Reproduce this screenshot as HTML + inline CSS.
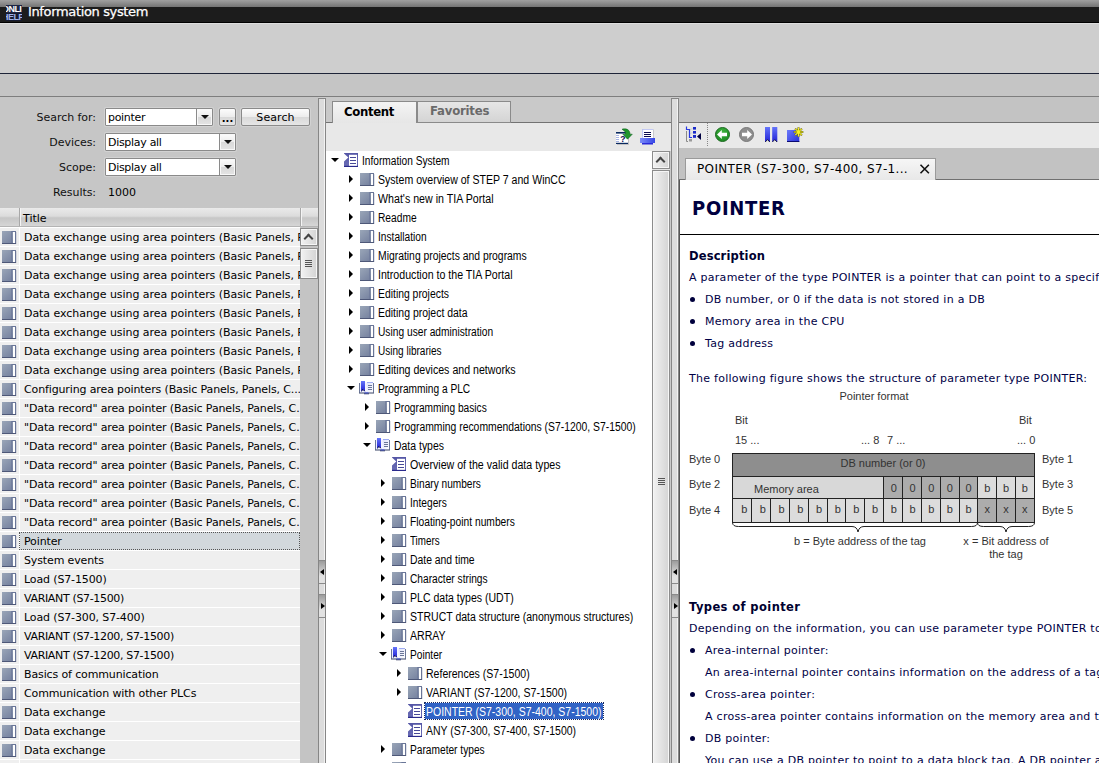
<!DOCTYPE html>
<html lang="en">
<head>
<meta charset="utf-8">
<title>Information system</title>
<style>
*{box-sizing:border-box;margin:0;padding:0}
html,body{width:1099px;height:763px;overflow:hidden;background:#cdcdcd}
body{font-family:"DejaVu Sans","Liberation Sans",sans-serif;font-size:11px;color:#000;position:relative}
#app{position:absolute;left:0;top:0;width:1099px;height:763px;overflow:hidden;background:#cdcdcd}
.abs{position:absolute}
/* title bar */
#tb-top{left:0;top:0;width:1099px;height:7px;background:linear-gradient(#a0a0a0,#747474)}
#tb{left:0;top:7px;width:1099px;height:15px;background:#1c1c1c}
#tb-line{left:0;top:22px;width:1099px;height:1px;background:#000}
#tb-hl{left:0;top:23px;width:1099px;height:1px;background:#dedede}
#logo{left:6px;top:5px;width:16px;height:16px;background:#10142a;overflow:hidden;font-family:"Liberation Sans",sans-serif;font-weight:bold;font-size:9px;line-height:8px;letter-spacing:-.55px}
#logo b{display:block;margin-left:-4px;white-space:nowrap}
#logo .l1{color:#fff;background:#1c2444;height:8px}
#logo .l2{color:#9fb2ea;background:#151a30;height:8px}
#title{left:28px;top:3px;-webkit-text-stroke:.25px #fff;color:#fff;font-size:13px;line-height:18px;letter-spacing:-.35px;white-space:nowrap}
#band1{left:0;top:24px;width:1099px;height:49px;background:#cecece}
#line1{left:0;top:73px;width:1099px;height:1px;background:#1e2438}
#band2{left:0;top:74px;width:1099px;height:22px;background:#c5c5c5}
#line2{left:0;top:96px;width:1099px;height:1px;background:#7e7e7e}
/* left panel */
#left{left:0;top:97px;width:318px;height:666px;background:#c6c6c6}
.lbl{position:absolute;width:96px;text-align:right;left:0;height:17px;line-height:19px;font-size:11px;letter-spacing:-.05px;color:#111}
.combo{position:absolute;height:18px;background:#fff;border-radius:1px;border:1px solid #8a8a8a;box-shadow:0 0 0 1px #d2d2d2;font-size:11px;line-height:17px;padding-left:2px;letter-spacing:-.3px}
.combo .dd{position:absolute;right:0;top:0;bottom:0;width:16px;border-left:1px solid #8a8a8a;background:linear-gradient(#fcfcfc 0,#ededed 48%,#d9d9d9 52%,#e4e4e4 100%);box-shadow:inset 0 0 0 1px #f8f8f8}
.combo .dd:after{content:"";position:absolute;left:4px;top:6px;border-left:4px solid transparent;border-right:4px solid transparent;border-top:4px solid #111}
.btn{position:absolute;height:18px;border:1px solid #8a8a8a;box-shadow:0 0 0 1px #d2d2d2;background:linear-gradient(#fcfcfc 0,#ededed 48%,#d9d9d9 52%,#e6e6e6 100%);border-radius:2px;font-size:11px;line-height:17px;text-align:center;letter-spacing:.1px}
#thead{left:0;top:111px;width:318px;height:19px;background:linear-gradient(#eaeaea 0,#dcdcdc 45%,#c6c6c6 55%,#d6d6d6 100%);border-bottom:1px solid #b4b4b4;font-size:11px;line-height:21px}
#thead i{position:absolute;top:0;width:1px;height:18px;background:#a8a8a8;box-shadow:1px 0 0 #f4f4f4}
#rows{position:absolute;left:0;top:130px;width:300px;height:540px;overflow:hidden;background:#fff}
.row{position:relative;height:19px;width:300px;overflow:hidden;white-space:nowrap;background:#efefef;border-top:1px solid #fff;font-size:11px;line-height:19px;letter-spacing:-.13px;color:#000}
.row .ic{position:absolute;left:1px;top:2px}
.row .rt{position:absolute;left:19px;top:0;height:18px;padding-left:4px;border-left:1px solid #fff;width:281px;overflow:hidden}
.row.sel .rt{background:#d2d8dc;outline:1px dotted #555;outline-offset:-1px}
.row.sel{background:#efefef}
.row.w1{letter-spacing:-.05px}
.row.w2{letter-spacing:-.34px}
#lsb{left:300px;top:130px;width:18px;height:536px;background:#c4c4c4}
.sbtn{position:absolute;width:18px;border:1px solid #8c8c8c;background:linear-gradient(90deg,#f2f2f2,#d4d4d4);box-shadow:inset 0 0 0 1px #f6f6f6}
.chev{position:absolute;left:4px;top:6px;width:7px;height:7px;border-left:2px solid #444;border-top:2px solid #444;transform:rotate(45deg)}
.grip{position:absolute;left:4px;width:7px;height:7px;background:repeating-linear-gradient(#555 0,#555 1px,transparent 1px,transparent 2px)}
/* splitters */
.split{position:absolute;top:98px;width:8px;height:665px;background:#dcdcdc;border-left:1px solid #868686;border-right:1px solid #868686;border-top:1px solid #868686;box-shadow:inset -1px 0 0 #f2f2f2}
.split .h{position:absolute;left:0;width:6px;height:24px;background:linear-gradient(#9c9c9c,#e2e2e2 70%);border-top:1px solid #8a8a8a;border-bottom:1px solid #8a8a8a}
.split .h:after{content:"";position:absolute;top:8px}
.split .hl:after{left:1px;border-top:3px solid transparent;border-bottom:3px solid transparent;border-right:4px solid #000}
.split .hr:after{left:2px;border-top:3px solid transparent;border-bottom:3px solid transparent;border-left:4px solid #000}
/* middle */
#mid{left:326px;top:97px;width:345px;height:666px;background:#c9c9c9}
#tabc{left:6px;top:4px;width:85px;height:22px;background:linear-gradient(#f4f4f4,#e6e6e6);border:1px solid #8a8a8a;border-bottom:none;font-family:"DejaVu Sans Condensed","DejaVu Sans",sans-serif;font-weight:bold;font-size:13px;line-height:19px;text-align:left;padding-left:11px;letter-spacing:-.35px;color:#000}
#tabf{left:91px;top:4px;width:94px;height:22px;background:linear-gradient(#e6e6e6,#d4d4d4);border:1px solid #8a8a8a;font-family:"DejaVu Sans Condensed","DejaVu Sans",sans-serif;font-weight:bold;font-size:13px;line-height:18px;text-align:left;padding-left:12px;letter-spacing:-.2px;color:#6a6a6a}
#mtool{left:0;top:25px;width:345px;height:29px;background:#e8e8e8;border-top:1px solid #727272}
#tree{position:absolute;left:0;top:54px;width:326px;height:612px;background:#fff;overflow:hidden;font-family:"Liberation Sans",sans-serif;font-size:12px}
.ti{position:relative;height:19px;white-space:nowrap}
.ti i{position:absolute;top:0;margin-left:4px}
.ti .ac{top:5px;margin-left:7px;border-top:4.5px solid transparent;border-bottom:4.5px solid transparent;border-left:4.5px solid #000}
.ti .ao{top:7px;margin-left:5px;border-left:4.5px solid transparent;border-right:4.5px solid transparent;border-top:4.5px solid #000}
.ti .ic{position:absolute;top:2px;margin-left:17px}
.ti .tt{position:absolute;top:1px;margin-left:35px;height:16px;line-height:19px;padding:0 1px}
.ti .tx{display:inline-block;transform-origin:0 50%;white-space:pre}
.ti .tsel{background:#3163c5;color:#fff;outline:1px dotted #1a2a60}
#msb{left:326px;top:54px;width:18px;height:612px;background:#e6e6e6}
/* right */
#right{left:679px;top:97px;width:420px;height:666px;background:#c3c3c3}
#rtool{left:0;top:25px;width:420px;height:26px;background:#e9e9e9;border-top:1px solid #727272}
#rband{left:0;top:51px;width:420px;height:32px;background:#c2c2c2;border-bottom:1px solid #707070}
#rtab{left:6px;top:61px;width:251px;height:22px;background:linear-gradient(#f6f6f6,#e8e8e8);border:1px solid #9a9a9a;border-bottom:none;font-size:12px;line-height:20px;letter-spacing:.35px;padding-left:11px;white-space:nowrap;color:#000}
#doc{left:0;top:83px;width:420px;height:583px;background:#fff;border-left:1px solid #555;overflow:hidden;font-size:11px;letter-spacing:.27px;color:#000046;white-space:nowrap}
#doc .ln{position:absolute;left:9px;height:22px;line-height:22px;margin-top:2px}
#doc .bl{left:25px}
#doc .dot{position:absolute;left:10px;margin-top:1px;width:5px;height:5px;border-radius:50%;background:#00003c}
#doc h1{position:absolute;left:12px;top:15px;font-family:"DejaVu Sans Condensed","DejaVu Sans",sans-serif;font-size:20px;line-height:26px;font-weight:bold;letter-spacing:.7px;color:#000040}
#doc h2{position:absolute;left:9px;font-size:11.5px;line-height:22px;font-weight:bold;letter-spacing:.15px;color:#000030;margin-top:2px}
#doc hr{position:absolute;left:0;top:54px;width:420px;height:1px;border:0;background:#000}
svg text{font-family:"Liberation Sans",sans-serif;letter-spacing:0}
</style>
</head>
<body>
<svg width="0" height="0" style="position:absolute">
<defs>
<linearGradient id="gbk" x1="0" y1="0" x2="1" y2="1"><stop offset="0" stop-color="#9aa6b8"/><stop offset="1" stop-color="#6e7a9a"/></linearGradient>
<linearGradient id="gfl" x1="0" y1="0" x2="0" y2="1"><stop offset="0" stop-color="#5456a6"/><stop offset="1" stop-color="#6c6eb6"/></linearGradient><linearGradient id="gbm" x1="0" y1="0" x2="0" y2="1"><stop offset="0" stop-color="#6474fa"/><stop offset="1" stop-color="#2222d6"/></linearGradient><linearGradient id="gpg" x1="0" y1="0" x2="1" y2="1"><stop offset="0" stop-color="#dde1fb"/><stop offset="1" stop-color="#ffffff"/></linearGradient>
</defs>
</svg>
<div id="app">
<div id="tb-top" class="abs"></div><div id="tb" class="abs"></div><div id="tb-line" class="abs"></div><div id="tb-hl" class="abs"></div>
<div id="logo" class="abs"><b class="l1">ONLI</b><b class="l2">HELP</b></div>
<div id="title" class="abs">Information system</div>
<div id="band1" class="abs"></div><div id="line1" class="abs"></div><div id="band2" class="abs"></div><div id="line2" class="abs"></div>

<div id="left" class="abs">
<div class="lbl" style="top:11px">Search for:</div>
<div class="lbl" style="top:36px">Devices:</div>
<div class="lbl" style="top:61px">Scope:</div>
<div class="lbl" style="top:86px">Results:</div>
<div class="combo" style="left:105px;top:11px;width:108px">pointer<span class="dd"></span></div>
<div class="btn" style="left:219px;top:11px;width:17px;font-weight:bold;font-size:10px;line-height:19px;letter-spacing:0">...</div>
<div class="btn" style="left:241px;top:11px;width:69px">Search</div>
<div class="combo" style="left:105px;top:36px;width:131px">Display all<span class="dd"></span></div>
<div class="combo" style="left:105px;top:61px;width:131px">Display all<span class="dd"></span></div>
<div class="abs" style="left:108px;top:86px;height:17px;line-height:19px;font-size:11px">1000</div>
<div id="thead" class="abs"><i style="left:19px"></i><i style="left:300px"></i><span class="abs" style="left:23px;top:0">Title</span></div>

<div id="rows">
<div class="row w1"><svg class="ic" width="16" height="14" viewBox="0 0 16 14"><rect x="1" y="1" width="14" height="13" fill="url(#gbk)"/><rect x="10" y="1" width="1" height="12" fill="#6c789a" opacity=".7"/><rect x="11" y="1" width="4" height="1" fill="#6a7698"/><rect x="12" y="2" width="2" height="11" fill="#fff"/><rect x="14" y="1" width="1" height="13" fill="#6a7698"/><rect x="1" y="13" width="14" height="1" fill="#4e5878"/><rect x="2" y="14" width="14" height=".6" fill="#5a6488" opacity=".3"/><rect x="15" y="2" width=".6" height="12" fill="#5a6488" opacity=".3"/></svg><span class="rt">Data exchange using area pointers (Basic Panels, Panels, Comfort Panels)</span></div>
<div class="row w1"><svg class="ic" width="16" height="14" viewBox="0 0 16 14"><rect x="1" y="1" width="14" height="13" fill="url(#gbk)"/><rect x="10" y="1" width="1" height="12" fill="#6c789a" opacity=".7"/><rect x="11" y="1" width="4" height="1" fill="#6a7698"/><rect x="12" y="2" width="2" height="11" fill="#fff"/><rect x="14" y="1" width="1" height="13" fill="#6a7698"/><rect x="1" y="13" width="14" height="1" fill="#4e5878"/><rect x="2" y="14" width="14" height=".6" fill="#5a6488" opacity=".3"/><rect x="15" y="2" width=".6" height="12" fill="#5a6488" opacity=".3"/></svg><span class="rt">Data exchange using area pointers (Basic Panels, Panels, Comfort Panels)</span></div>
<div class="row w1"><svg class="ic" width="16" height="14" viewBox="0 0 16 14"><rect x="1" y="1" width="14" height="13" fill="url(#gbk)"/><rect x="10" y="1" width="1" height="12" fill="#6c789a" opacity=".7"/><rect x="11" y="1" width="4" height="1" fill="#6a7698"/><rect x="12" y="2" width="2" height="11" fill="#fff"/><rect x="14" y="1" width="1" height="13" fill="#6a7698"/><rect x="1" y="13" width="14" height="1" fill="#4e5878"/><rect x="2" y="14" width="14" height=".6" fill="#5a6488" opacity=".3"/><rect x="15" y="2" width=".6" height="12" fill="#5a6488" opacity=".3"/></svg><span class="rt">Data exchange using area pointers (Basic Panels, Panels, Comfort Panels)</span></div>
<div class="row w1"><svg class="ic" width="16" height="14" viewBox="0 0 16 14"><rect x="1" y="1" width="14" height="13" fill="url(#gbk)"/><rect x="10" y="1" width="1" height="12" fill="#6c789a" opacity=".7"/><rect x="11" y="1" width="4" height="1" fill="#6a7698"/><rect x="12" y="2" width="2" height="11" fill="#fff"/><rect x="14" y="1" width="1" height="13" fill="#6a7698"/><rect x="1" y="13" width="14" height="1" fill="#4e5878"/><rect x="2" y="14" width="14" height=".6" fill="#5a6488" opacity=".3"/><rect x="15" y="2" width=".6" height="12" fill="#5a6488" opacity=".3"/></svg><span class="rt">Data exchange using area pointers (Basic Panels, Panels, Comfort Panels)</span></div>
<div class="row w1"><svg class="ic" width="16" height="14" viewBox="0 0 16 14"><rect x="1" y="1" width="14" height="13" fill="url(#gbk)"/><rect x="10" y="1" width="1" height="12" fill="#6c789a" opacity=".7"/><rect x="11" y="1" width="4" height="1" fill="#6a7698"/><rect x="12" y="2" width="2" height="11" fill="#fff"/><rect x="14" y="1" width="1" height="13" fill="#6a7698"/><rect x="1" y="13" width="14" height="1" fill="#4e5878"/><rect x="2" y="14" width="14" height=".6" fill="#5a6488" opacity=".3"/><rect x="15" y="2" width=".6" height="12" fill="#5a6488" opacity=".3"/></svg><span class="rt">Data exchange using area pointers (Basic Panels, Panels, Comfort Panels)</span></div>
<div class="row w1"><svg class="ic" width="16" height="14" viewBox="0 0 16 14"><rect x="1" y="1" width="14" height="13" fill="url(#gbk)"/><rect x="10" y="1" width="1" height="12" fill="#6c789a" opacity=".7"/><rect x="11" y="1" width="4" height="1" fill="#6a7698"/><rect x="12" y="2" width="2" height="11" fill="#fff"/><rect x="14" y="1" width="1" height="13" fill="#6a7698"/><rect x="1" y="13" width="14" height="1" fill="#4e5878"/><rect x="2" y="14" width="14" height=".6" fill="#5a6488" opacity=".3"/><rect x="15" y="2" width=".6" height="12" fill="#5a6488" opacity=".3"/></svg><span class="rt">Data exchange using area pointers (Basic Panels, Panels, Comfort Panels)</span></div>
<div class="row w1"><svg class="ic" width="16" height="14" viewBox="0 0 16 14"><rect x="1" y="1" width="14" height="13" fill="url(#gbk)"/><rect x="10" y="1" width="1" height="12" fill="#6c789a" opacity=".7"/><rect x="11" y="1" width="4" height="1" fill="#6a7698"/><rect x="12" y="2" width="2" height="11" fill="#fff"/><rect x="14" y="1" width="1" height="13" fill="#6a7698"/><rect x="1" y="13" width="14" height="1" fill="#4e5878"/><rect x="2" y="14" width="14" height=".6" fill="#5a6488" opacity=".3"/><rect x="15" y="2" width=".6" height="12" fill="#5a6488" opacity=".3"/></svg><span class="rt">Data exchange using area pointers (Basic Panels, Panels, Comfort Panels)</span></div>
<div class="row w1"><svg class="ic" width="16" height="14" viewBox="0 0 16 14"><rect x="1" y="1" width="14" height="13" fill="url(#gbk)"/><rect x="10" y="1" width="1" height="12" fill="#6c789a" opacity=".7"/><rect x="11" y="1" width="4" height="1" fill="#6a7698"/><rect x="12" y="2" width="2" height="11" fill="#fff"/><rect x="14" y="1" width="1" height="13" fill="#6a7698"/><rect x="1" y="13" width="14" height="1" fill="#4e5878"/><rect x="2" y="14" width="14" height=".6" fill="#5a6488" opacity=".3"/><rect x="15" y="2" width=".6" height="12" fill="#5a6488" opacity=".3"/></svg><span class="rt">Data exchange using area pointers (Basic Panels, Panels, Comfort Panels)</span></div>
<div class="row"><svg class="ic" width="16" height="14" viewBox="0 0 16 14"><rect x="1" y="1" width="14" height="13" fill="url(#gbk)"/><rect x="10" y="1" width="1" height="12" fill="#6c789a" opacity=".7"/><rect x="11" y="1" width="4" height="1" fill="#6a7698"/><rect x="12" y="2" width="2" height="11" fill="#fff"/><rect x="14" y="1" width="1" height="13" fill="#6a7698"/><rect x="1" y="13" width="14" height="1" fill="#4e5878"/><rect x="2" y="14" width="14" height=".6" fill="#5a6488" opacity=".3"/><rect x="15" y="2" width=".6" height="12" fill="#5a6488" opacity=".3"/></svg><span class="rt">Configuring area pointers (Basic Panels, Panels, C...</span></div>
<div class="row"><svg class="ic" width="16" height="14" viewBox="0 0 16 14"><rect x="1" y="1" width="14" height="13" fill="url(#gbk)"/><rect x="10" y="1" width="1" height="12" fill="#6c789a" opacity=".7"/><rect x="11" y="1" width="4" height="1" fill="#6a7698"/><rect x="12" y="2" width="2" height="11" fill="#fff"/><rect x="14" y="1" width="1" height="13" fill="#6a7698"/><rect x="1" y="13" width="14" height="1" fill="#4e5878"/><rect x="2" y="14" width="14" height=".6" fill="#5a6488" opacity=".3"/><rect x="15" y="2" width=".6" height="12" fill="#5a6488" opacity=".3"/></svg><span class="rt">&quot;Data record&quot; area pointer (Basic Panels, Panels, C...</span></div>
<div class="row"><svg class="ic" width="16" height="14" viewBox="0 0 16 14"><rect x="1" y="1" width="14" height="13" fill="url(#gbk)"/><rect x="10" y="1" width="1" height="12" fill="#6c789a" opacity=".7"/><rect x="11" y="1" width="4" height="1" fill="#6a7698"/><rect x="12" y="2" width="2" height="11" fill="#fff"/><rect x="14" y="1" width="1" height="13" fill="#6a7698"/><rect x="1" y="13" width="14" height="1" fill="#4e5878"/><rect x="2" y="14" width="14" height=".6" fill="#5a6488" opacity=".3"/><rect x="15" y="2" width=".6" height="12" fill="#5a6488" opacity=".3"/></svg><span class="rt">&quot;Data record&quot; area pointer (Basic Panels, Panels, C...</span></div>
<div class="row"><svg class="ic" width="16" height="14" viewBox="0 0 16 14"><rect x="1" y="1" width="14" height="13" fill="url(#gbk)"/><rect x="10" y="1" width="1" height="12" fill="#6c789a" opacity=".7"/><rect x="11" y="1" width="4" height="1" fill="#6a7698"/><rect x="12" y="2" width="2" height="11" fill="#fff"/><rect x="14" y="1" width="1" height="13" fill="#6a7698"/><rect x="1" y="13" width="14" height="1" fill="#4e5878"/><rect x="2" y="14" width="14" height=".6" fill="#5a6488" opacity=".3"/><rect x="15" y="2" width=".6" height="12" fill="#5a6488" opacity=".3"/></svg><span class="rt">&quot;Data record&quot; area pointer (Basic Panels, Panels, C...</span></div>
<div class="row"><svg class="ic" width="16" height="14" viewBox="0 0 16 14"><rect x="1" y="1" width="14" height="13" fill="url(#gbk)"/><rect x="10" y="1" width="1" height="12" fill="#6c789a" opacity=".7"/><rect x="11" y="1" width="4" height="1" fill="#6a7698"/><rect x="12" y="2" width="2" height="11" fill="#fff"/><rect x="14" y="1" width="1" height="13" fill="#6a7698"/><rect x="1" y="13" width="14" height="1" fill="#4e5878"/><rect x="2" y="14" width="14" height=".6" fill="#5a6488" opacity=".3"/><rect x="15" y="2" width=".6" height="12" fill="#5a6488" opacity=".3"/></svg><span class="rt">&quot;Data record&quot; area pointer (Basic Panels, Panels, C...</span></div>
<div class="row"><svg class="ic" width="16" height="14" viewBox="0 0 16 14"><rect x="1" y="1" width="14" height="13" fill="url(#gbk)"/><rect x="10" y="1" width="1" height="12" fill="#6c789a" opacity=".7"/><rect x="11" y="1" width="4" height="1" fill="#6a7698"/><rect x="12" y="2" width="2" height="11" fill="#fff"/><rect x="14" y="1" width="1" height="13" fill="#6a7698"/><rect x="1" y="13" width="14" height="1" fill="#4e5878"/><rect x="2" y="14" width="14" height=".6" fill="#5a6488" opacity=".3"/><rect x="15" y="2" width=".6" height="12" fill="#5a6488" opacity=".3"/></svg><span class="rt">&quot;Data record&quot; area pointer (Basic Panels, Panels, C...</span></div>
<div class="row"><svg class="ic" width="16" height="14" viewBox="0 0 16 14"><rect x="1" y="1" width="14" height="13" fill="url(#gbk)"/><rect x="10" y="1" width="1" height="12" fill="#6c789a" opacity=".7"/><rect x="11" y="1" width="4" height="1" fill="#6a7698"/><rect x="12" y="2" width="2" height="11" fill="#fff"/><rect x="14" y="1" width="1" height="13" fill="#6a7698"/><rect x="1" y="13" width="14" height="1" fill="#4e5878"/><rect x="2" y="14" width="14" height=".6" fill="#5a6488" opacity=".3"/><rect x="15" y="2" width=".6" height="12" fill="#5a6488" opacity=".3"/></svg><span class="rt">&quot;Data record&quot; area pointer (Basic Panels, Panels, C...</span></div>
<div class="row"><svg class="ic" width="16" height="14" viewBox="0 0 16 14"><rect x="1" y="1" width="14" height="13" fill="url(#gbk)"/><rect x="10" y="1" width="1" height="12" fill="#6c789a" opacity=".7"/><rect x="11" y="1" width="4" height="1" fill="#6a7698"/><rect x="12" y="2" width="2" height="11" fill="#fff"/><rect x="14" y="1" width="1" height="13" fill="#6a7698"/><rect x="1" y="13" width="14" height="1" fill="#4e5878"/><rect x="2" y="14" width="14" height=".6" fill="#5a6488" opacity=".3"/><rect x="15" y="2" width=".6" height="12" fill="#5a6488" opacity=".3"/></svg><span class="rt">&quot;Data record&quot; area pointer (Basic Panels, Panels, C...</span></div>
<div class="row sel"><svg class="ic" width="16" height="14" viewBox="0 0 16 14"><rect x="1" y="1" width="14" height="13" fill="url(#gbk)"/><rect x="10" y="1" width="1" height="12" fill="#6c789a" opacity=".7"/><rect x="11" y="1" width="4" height="1" fill="#6a7698"/><rect x="12" y="2" width="2" height="11" fill="#fff"/><rect x="14" y="1" width="1" height="13" fill="#6a7698"/><rect x="1" y="13" width="14" height="1" fill="#4e5878"/><rect x="2" y="14" width="14" height=".6" fill="#5a6488" opacity=".3"/><rect x="15" y="2" width=".6" height="12" fill="#5a6488" opacity=".3"/></svg><span class="rt">Pointer</span></div>
<div class="row"><svg class="ic" width="16" height="14" viewBox="0 0 16 14"><rect x="1" y="1" width="14" height="13" fill="url(#gbk)"/><rect x="10" y="1" width="1" height="12" fill="#6c789a" opacity=".7"/><rect x="11" y="1" width="4" height="1" fill="#6a7698"/><rect x="12" y="2" width="2" height="11" fill="#fff"/><rect x="14" y="1" width="1" height="13" fill="#6a7698"/><rect x="1" y="13" width="14" height="1" fill="#4e5878"/><rect x="2" y="14" width="14" height=".6" fill="#5a6488" opacity=".3"/><rect x="15" y="2" width=".6" height="12" fill="#5a6488" opacity=".3"/></svg><span class="rt">System events</span></div>
<div class="row"><svg class="ic" width="16" height="14" viewBox="0 0 16 14"><rect x="1" y="1" width="14" height="13" fill="url(#gbk)"/><rect x="10" y="1" width="1" height="12" fill="#6c789a" opacity=".7"/><rect x="11" y="1" width="4" height="1" fill="#6a7698"/><rect x="12" y="2" width="2" height="11" fill="#fff"/><rect x="14" y="1" width="1" height="13" fill="#6a7698"/><rect x="1" y="13" width="14" height="1" fill="#4e5878"/><rect x="2" y="14" width="14" height=".6" fill="#5a6488" opacity=".3"/><rect x="15" y="2" width=".6" height="12" fill="#5a6488" opacity=".3"/></svg><span class="rt">Load (S7-1500)</span></div>
<div class="row w2"><svg class="ic" width="16" height="14" viewBox="0 0 16 14"><rect x="1" y="1" width="14" height="13" fill="url(#gbk)"/><rect x="10" y="1" width="1" height="12" fill="#6c789a" opacity=".7"/><rect x="11" y="1" width="4" height="1" fill="#6a7698"/><rect x="12" y="2" width="2" height="11" fill="#fff"/><rect x="14" y="1" width="1" height="13" fill="#6a7698"/><rect x="1" y="13" width="14" height="1" fill="#4e5878"/><rect x="2" y="14" width="14" height=".6" fill="#5a6488" opacity=".3"/><rect x="15" y="2" width=".6" height="12" fill="#5a6488" opacity=".3"/></svg><span class="rt">VARIANT (S7-1500)</span></div>
<div class="row"><svg class="ic" width="16" height="14" viewBox="0 0 16 14"><rect x="1" y="1" width="14" height="13" fill="url(#gbk)"/><rect x="10" y="1" width="1" height="12" fill="#6c789a" opacity=".7"/><rect x="11" y="1" width="4" height="1" fill="#6a7698"/><rect x="12" y="2" width="2" height="11" fill="#fff"/><rect x="14" y="1" width="1" height="13" fill="#6a7698"/><rect x="1" y="13" width="14" height="1" fill="#4e5878"/><rect x="2" y="14" width="14" height=".6" fill="#5a6488" opacity=".3"/><rect x="15" y="2" width=".6" height="12" fill="#5a6488" opacity=".3"/></svg><span class="rt">Load (S7-300, S7-400)</span></div>
<div class="row w2"><svg class="ic" width="16" height="14" viewBox="0 0 16 14"><rect x="1" y="1" width="14" height="13" fill="url(#gbk)"/><rect x="10" y="1" width="1" height="12" fill="#6c789a" opacity=".7"/><rect x="11" y="1" width="4" height="1" fill="#6a7698"/><rect x="12" y="2" width="2" height="11" fill="#fff"/><rect x="14" y="1" width="1" height="13" fill="#6a7698"/><rect x="1" y="13" width="14" height="1" fill="#4e5878"/><rect x="2" y="14" width="14" height=".6" fill="#5a6488" opacity=".3"/><rect x="15" y="2" width=".6" height="12" fill="#5a6488" opacity=".3"/></svg><span class="rt">VARIANT (S7-1200, S7-1500)</span></div>
<div class="row w2"><svg class="ic" width="16" height="14" viewBox="0 0 16 14"><rect x="1" y="1" width="14" height="13" fill="url(#gbk)"/><rect x="10" y="1" width="1" height="12" fill="#6c789a" opacity=".7"/><rect x="11" y="1" width="4" height="1" fill="#6a7698"/><rect x="12" y="2" width="2" height="11" fill="#fff"/><rect x="14" y="1" width="1" height="13" fill="#6a7698"/><rect x="1" y="13" width="14" height="1" fill="#4e5878"/><rect x="2" y="14" width="14" height=".6" fill="#5a6488" opacity=".3"/><rect x="15" y="2" width=".6" height="12" fill="#5a6488" opacity=".3"/></svg><span class="rt">VARIANT (S7-1200, S7-1500)</span></div>
<div class="row"><svg class="ic" width="16" height="14" viewBox="0 0 16 14"><rect x="1" y="1" width="14" height="13" fill="url(#gbk)"/><rect x="10" y="1" width="1" height="12" fill="#6c789a" opacity=".7"/><rect x="11" y="1" width="4" height="1" fill="#6a7698"/><rect x="12" y="2" width="2" height="11" fill="#fff"/><rect x="14" y="1" width="1" height="13" fill="#6a7698"/><rect x="1" y="13" width="14" height="1" fill="#4e5878"/><rect x="2" y="14" width="14" height=".6" fill="#5a6488" opacity=".3"/><rect x="15" y="2" width=".6" height="12" fill="#5a6488" opacity=".3"/></svg><span class="rt">Basics of communication</span></div>
<div class="row"><svg class="ic" width="16" height="14" viewBox="0 0 16 14"><rect x="1" y="1" width="14" height="13" fill="url(#gbk)"/><rect x="10" y="1" width="1" height="12" fill="#6c789a" opacity=".7"/><rect x="11" y="1" width="4" height="1" fill="#6a7698"/><rect x="12" y="2" width="2" height="11" fill="#fff"/><rect x="14" y="1" width="1" height="13" fill="#6a7698"/><rect x="1" y="13" width="14" height="1" fill="#4e5878"/><rect x="2" y="14" width="14" height=".6" fill="#5a6488" opacity=".3"/><rect x="15" y="2" width=".6" height="12" fill="#5a6488" opacity=".3"/></svg><span class="rt">Communication with other PLCs</span></div>
<div class="row"><svg class="ic" width="16" height="14" viewBox="0 0 16 14"><rect x="1" y="1" width="14" height="13" fill="url(#gbk)"/><rect x="10" y="1" width="1" height="12" fill="#6c789a" opacity=".7"/><rect x="11" y="1" width="4" height="1" fill="#6a7698"/><rect x="12" y="2" width="2" height="11" fill="#fff"/><rect x="14" y="1" width="1" height="13" fill="#6a7698"/><rect x="1" y="13" width="14" height="1" fill="#4e5878"/><rect x="2" y="14" width="14" height=".6" fill="#5a6488" opacity=".3"/><rect x="15" y="2" width=".6" height="12" fill="#5a6488" opacity=".3"/></svg><span class="rt">Data exchange</span></div>
<div class="row"><svg class="ic" width="16" height="14" viewBox="0 0 16 14"><rect x="1" y="1" width="14" height="13" fill="url(#gbk)"/><rect x="10" y="1" width="1" height="12" fill="#6c789a" opacity=".7"/><rect x="11" y="1" width="4" height="1" fill="#6a7698"/><rect x="12" y="2" width="2" height="11" fill="#fff"/><rect x="14" y="1" width="1" height="13" fill="#6a7698"/><rect x="1" y="13" width="14" height="1" fill="#4e5878"/><rect x="2" y="14" width="14" height=".6" fill="#5a6488" opacity=".3"/><rect x="15" y="2" width=".6" height="12" fill="#5a6488" opacity=".3"/></svg><span class="rt">Data exchange</span></div>
<div class="row"><svg class="ic" width="16" height="14" viewBox="0 0 16 14"><rect x="1" y="1" width="14" height="13" fill="url(#gbk)"/><rect x="10" y="1" width="1" height="12" fill="#6c789a" opacity=".7"/><rect x="11" y="1" width="4" height="1" fill="#6a7698"/><rect x="12" y="2" width="2" height="11" fill="#fff"/><rect x="14" y="1" width="1" height="13" fill="#6a7698"/><rect x="1" y="13" width="14" height="1" fill="#4e5878"/><rect x="2" y="14" width="14" height=".6" fill="#5a6488" opacity=".3"/><rect x="15" y="2" width=".6" height="12" fill="#5a6488" opacity=".3"/></svg><span class="rt">Data exchange</span></div>
<div class="row"><svg class="ic" width="16" height="14" viewBox="0 0 16 14"><rect x="1" y="1" width="14" height="13" fill="url(#gbk)"/><rect x="10" y="1" width="1" height="12" fill="#6c789a" opacity=".7"/><rect x="11" y="1" width="4" height="1" fill="#6a7698"/><rect x="12" y="2" width="2" height="11" fill="#fff"/><rect x="14" y="1" width="1" height="13" fill="#6a7698"/><rect x="1" y="13" width="14" height="1" fill="#4e5878"/><rect x="2" y="14" width="14" height=".6" fill="#5a6488" opacity=".3"/><rect x="15" y="2" width=".6" height="12" fill="#5a6488" opacity=".3"/></svg><span class="rt">Data exchange</span></div>
</div>
<div id="lsb" class="abs">
<div class="sbtn" style="left:0;top:1px;height:18px"><span class="chev"></span></div>
<div class="sbtn" style="left:0;top:21px;height:31px"><span class="grip" style="top:11px"></span></div>
</div>
</div><!-- /left -->

<div class="split" style="left:318px"><div class="h hl" style="top:461px"></div><div class="h hr" style="top:495px"></div></div>

<div id="mid" class="abs">
<div id="mtool" class="abs">
<svg class="abs" style="left:288px;top:5px" width="20" height="18" viewBox="0 0 20 18"><rect x="3" y="5" width="12" height="12" fill="#9a9aa0" opacity=".5"/><rect x="2" y="4" width="12" height="12" fill="#fff"/><rect x="2" y="4" width="12" height="1.600" fill="#0a2a60"/><rect x="2" y="14.800" width="12" height="1.200" fill="#0a2a60"/><path d="M2 7.500h3M2 9.500h3M2 11.500h3M2 13.500h3" stroke="#a8b4e4" stroke-width="1"/><text x="6.300" y="13.800" font-size="8.500" font-weight="bold" fill="#0a0a50">?</text><path d="M8 1.200c5-1.200 8 1 8 5h2.300l-4.800 5-4.700-5h2.800c0-2-1-3.400-3.600-5z" fill="#1f962c" stroke="#0b5a18" stroke-width=".5"/></svg>
<svg class="abs" style="left:313px;top:5px" width="18" height="18" viewBox="0 0 18 18"><rect x="4" y="1.500" width="11" height="9" fill="#8a8a98" opacity=".5"/><rect x="3.200" y="1" width="11" height="9.500" fill="#fff"/><rect x="3.200" y="1" width="11" height=".8" fill="#b4bcf2"/><rect x="3.200" y="1" width=".9" height="9" fill="#b4bcf2"/><rect x="5" y="4" width="7" height="1" fill="#0a0a50"/><rect x="5" y="6" width="7" height="1" fill="#0a0a50"/><rect x="5" y="8" width="7" height="1" fill="#0a0a50"/><rect x="1" y="10" width="15" height="5" fill="url(#gpr)"/><rect x="3" y="15" width="11" height="1.500" fill="#2a2ad8"/><defs><linearGradient id="gpr" x1="0" y1="0" x2="1" y2="0"><stop offset="0" stop-color="#7c8cf8"/><stop offset="1" stop-color="#3646e6"/></linearGradient></defs></svg>
</div>
<div id="tabc" class="abs">Content</div>
<div id="tabf" class="abs">Favorites</div>

<div id="tree">
<div class="ti" style="padding-left:0px"><i class="ao"></i><svg class="ic" width="16" height="14" viewBox="0 0 16 14"><rect x="1" y="0" width="14" height="14" fill="url(#gfl)"/><rect x="1" y="12.800" width="14" height="1.200" fill="#2a2a8c"/><path d="M1 .6L5.300 4.600 1 8.600z" fill="#fff"/><rect x="6" y="1.800" width="8" height="11" fill="#fff"/><rect x="7" y="4" width="6" height="1" fill="#484a98"/><rect x="7" y="7" width="6" height="1" fill="#484a98"/><rect x="7" y="10" width="6" height="1" fill="#484a98"/></svg><span class="tt" style="width:91px"><span class="tx" style="transform:scaleX(0.847)">Information System</span></span></div>
<div class="ti" style="padding-left:16px"><i class="ac"></i><svg class="ic" width="16" height="14" viewBox="0 0 16 14"><rect x="1" y="1" width="14" height="13" fill="url(#gbk)"/><rect x="10" y="1" width="1" height="12" fill="#6c789a" opacity=".7"/><rect x="11" y="1" width="4" height="1" fill="#6a7698"/><rect x="12" y="2" width="2" height="11" fill="#fff"/><rect x="14" y="1" width="1" height="13" fill="#6a7698"/><rect x="1" y="13" width="14" height="1" fill="#4e5878"/><rect x="2" y="14" width="14" height=".6" fill="#5a6488" opacity=".3"/><rect x="15" y="2" width=".6" height="12" fill="#5a6488" opacity=".3"/></svg><span class="tt" style="width:191px"><span class="tx" style="transform:scaleX(0.88)">System overview of STEP 7 and WinCC</span></span></div>
<div class="ti" style="padding-left:16px"><i class="ac"></i><svg class="ic" width="16" height="14" viewBox="0 0 16 14"><rect x="1" y="1" width="14" height="13" fill="url(#gbk)"/><rect x="10" y="1" width="1" height="12" fill="#6c789a" opacity=".7"/><rect x="11" y="1" width="4" height="1" fill="#6a7698"/><rect x="12" y="2" width="2" height="11" fill="#fff"/><rect x="14" y="1" width="1" height="13" fill="#6a7698"/><rect x="1" y="13" width="14" height="1" fill="#4e5878"/><rect x="2" y="14" width="14" height=".6" fill="#5a6488" opacity=".3"/><rect x="15" y="2" width=".6" height="12" fill="#5a6488" opacity=".3"/></svg><span class="tt" style="width:119px"><span class="tx" style="transform:scaleX(0.888)">What&#x27;s new in TIA Portal</span></span></div>
<div class="ti" style="padding-left:16px"><i class="ac"></i><svg class="ic" width="16" height="14" viewBox="0 0 16 14"><rect x="1" y="1" width="14" height="13" fill="url(#gbk)"/><rect x="10" y="1" width="1" height="12" fill="#6c789a" opacity=".7"/><rect x="11" y="1" width="4" height="1" fill="#6a7698"/><rect x="12" y="2" width="2" height="11" fill="#fff"/><rect x="14" y="1" width="1" height="13" fill="#6a7698"/><rect x="1" y="13" width="14" height="1" fill="#4e5878"/><rect x="2" y="14" width="14" height=".6" fill="#5a6488" opacity=".3"/><rect x="15" y="2" width=".6" height="12" fill="#5a6488" opacity=".3"/></svg><span class="tt" style="width:42px"><span class="tx" style="transform:scaleX(0.851)">Readme</span></span></div>
<div class="ti" style="padding-left:16px"><i class="ac"></i><svg class="ic" width="16" height="14" viewBox="0 0 16 14"><rect x="1" y="1" width="14" height="13" fill="url(#gbk)"/><rect x="10" y="1" width="1" height="12" fill="#6c789a" opacity=".7"/><rect x="11" y="1" width="4" height="1" fill="#6a7698"/><rect x="12" y="2" width="2" height="11" fill="#fff"/><rect x="14" y="1" width="1" height="13" fill="#6a7698"/><rect x="1" y="13" width="14" height="1" fill="#4e5878"/><rect x="2" y="14" width="14" height=".6" fill="#5a6488" opacity=".3"/><rect x="15" y="2" width=".6" height="12" fill="#5a6488" opacity=".3"/></svg><span class="tt" style="width:52px"><span class="tx" style="transform:scaleX(0.847)">Installation</span></span></div>
<div class="ti" style="padding-left:16px"><i class="ac"></i><svg class="ic" width="16" height="14" viewBox="0 0 16 14"><rect x="1" y="1" width="14" height="13" fill="url(#gbk)"/><rect x="10" y="1" width="1" height="12" fill="#6c789a" opacity=".7"/><rect x="11" y="1" width="4" height="1" fill="#6a7698"/><rect x="12" y="2" width="2" height="11" fill="#fff"/><rect x="14" y="1" width="1" height="13" fill="#6a7698"/><rect x="1" y="13" width="14" height="1" fill="#4e5878"/><rect x="2" y="14" width="14" height=".6" fill="#5a6488" opacity=".3"/><rect x="15" y="2" width=".6" height="12" fill="#5a6488" opacity=".3"/></svg><span class="tt" style="width:152px"><span class="tx" style="transform:scaleX(0.864)">Migrating projects and programs</span></span></div>
<div class="ti" style="padding-left:16px"><i class="ac"></i><svg class="ic" width="16" height="14" viewBox="0 0 16 14"><rect x="1" y="1" width="14" height="13" fill="url(#gbk)"/><rect x="10" y="1" width="1" height="12" fill="#6c789a" opacity=".7"/><rect x="11" y="1" width="4" height="1" fill="#6a7698"/><rect x="12" y="2" width="2" height="11" fill="#fff"/><rect x="14" y="1" width="1" height="13" fill="#6a7698"/><rect x="1" y="13" width="14" height="1" fill="#4e5878"/><rect x="2" y="14" width="14" height=".6" fill="#5a6488" opacity=".3"/><rect x="15" y="2" width=".6" height="12" fill="#5a6488" opacity=".3"/></svg><span class="tt" style="width:138px"><span class="tx" style="transform:scaleX(0.886)">Introduction to the TIA Portal</span></span></div>
<div class="ti" style="padding-left:16px"><i class="ac"></i><svg class="ic" width="16" height="14" viewBox="0 0 16 14"><rect x="1" y="1" width="14" height="13" fill="url(#gbk)"/><rect x="10" y="1" width="1" height="12" fill="#6c789a" opacity=".7"/><rect x="11" y="1" width="4" height="1" fill="#6a7698"/><rect x="12" y="2" width="2" height="11" fill="#fff"/><rect x="14" y="1" width="1" height="13" fill="#6a7698"/><rect x="1" y="13" width="14" height="1" fill="#4e5878"/><rect x="2" y="14" width="14" height=".6" fill="#5a6488" opacity=".3"/><rect x="15" y="2" width=".6" height="12" fill="#5a6488" opacity=".3"/></svg><span class="tt" style="width:74px"><span class="tx" style="transform:scaleX(0.865)">Editing projects</span></span></div>
<div class="ti" style="padding-left:16px"><i class="ac"></i><svg class="ic" width="16" height="14" viewBox="0 0 16 14"><rect x="1" y="1" width="14" height="13" fill="url(#gbk)"/><rect x="10" y="1" width="1" height="12" fill="#6c789a" opacity=".7"/><rect x="11" y="1" width="4" height="1" fill="#6a7698"/><rect x="12" y="2" width="2" height="11" fill="#fff"/><rect x="14" y="1" width="1" height="13" fill="#6a7698"/><rect x="1" y="13" width="14" height="1" fill="#4e5878"/><rect x="2" y="14" width="14" height=".6" fill="#5a6488" opacity=".3"/><rect x="15" y="2" width=".6" height="12" fill="#5a6488" opacity=".3"/></svg><span class="tt" style="width:93px"><span class="tx" style="transform:scaleX(0.872)">Editing project data</span></span></div>
<div class="ti" style="padding-left:16px"><i class="ac"></i><svg class="ic" width="16" height="14" viewBox="0 0 16 14"><rect x="1" y="1" width="14" height="13" fill="url(#gbk)"/><rect x="10" y="1" width="1" height="12" fill="#6c789a" opacity=".7"/><rect x="11" y="1" width="4" height="1" fill="#6a7698"/><rect x="12" y="2" width="2" height="11" fill="#fff"/><rect x="14" y="1" width="1" height="13" fill="#6a7698"/><rect x="1" y="13" width="14" height="1" fill="#4e5878"/><rect x="2" y="14" width="14" height=".6" fill="#5a6488" opacity=".3"/><rect x="15" y="2" width=".6" height="12" fill="#5a6488" opacity=".3"/></svg><span class="tt" style="width:118px"><span class="tx" style="transform:scaleX(0.851)">Using user administration</span></span></div>
<div class="ti" style="padding-left:16px"><i class="ac"></i><svg class="ic" width="16" height="14" viewBox="0 0 16 14"><rect x="1" y="1" width="14" height="13" fill="url(#gbk)"/><rect x="10" y="1" width="1" height="12" fill="#6c789a" opacity=".7"/><rect x="11" y="1" width="4" height="1" fill="#6a7698"/><rect x="12" y="2" width="2" height="11" fill="#fff"/><rect x="14" y="1" width="1" height="13" fill="#6a7698"/><rect x="1" y="13" width="14" height="1" fill="#4e5878"/><rect x="2" y="14" width="14" height=".6" fill="#5a6488" opacity=".3"/><rect x="15" y="2" width=".6" height="12" fill="#5a6488" opacity=".3"/></svg><span class="tt" style="width:67px"><span class="tx" style="transform:scaleX(0.836)">Using libraries</span></span></div>
<div class="ti" style="padding-left:16px"><i class="ac"></i><svg class="ic" width="16" height="14" viewBox="0 0 16 14"><rect x="1" y="1" width="14" height="13" fill="url(#gbk)"/><rect x="10" y="1" width="1" height="12" fill="#6c789a" opacity=".7"/><rect x="11" y="1" width="4" height="1" fill="#6a7698"/><rect x="12" y="2" width="2" height="11" fill="#fff"/><rect x="14" y="1" width="1" height="13" fill="#6a7698"/><rect x="1" y="13" width="14" height="1" fill="#4e5878"/><rect x="2" y="14" width="14" height=".6" fill="#5a6488" opacity=".3"/><rect x="15" y="2" width=".6" height="12" fill="#5a6488" opacity=".3"/></svg><span class="tt" style="width:141px"><span class="tx" style="transform:scaleX(0.885)">Editing devices and networks</span></span></div>
<div class="ti" style="padding-left:16px"><i class="ao"></i><svg class="ic" width="16" height="14" viewBox="0 0 16 14"><rect x="0" y="2" width="1" height="10" fill="#6a7698"/><rect x="1" y="1.500" width="6" height="10.500" fill="#eef0ff"/><rect x="6.500" y="1.500" width="1" height="10.500" fill="#f8f8ff"/><rect x="7.500" y="1.500" width="6.500" height="10.500" fill="url(#gpg)"/><rect x="8" y="1" width="6" height=".8" fill="#8a9af0"/><path d="M2 0h4v10.500l-2-2-2 2z" fill="url(#gbm)"/><path d="M2.300 10.200L4 8.500l1.700 1.700" fill="none" stroke="#00002a" stroke-width="1"/><rect x="9" y="4" width="4" height="1" fill="#6a7698"/><rect x="9" y="6" width="4" height="1" fill="#6a7698"/><rect x="9" y="8" width="4" height="1" fill="#6a7698"/><rect x="14" y="2" width="1" height="10" fill="#6a7698"/><rect x="0" y="11.400" width="15" height="1.200" fill="#5a6480"/><rect x="5" y="12" width="5" height="1.300" fill="#4a5070"/><rect x="5.500" y="11.400" width="4" height="1" fill="#4a5ae0"/></svg><span class="tt" style="width:95px"><span class="tx" style="transform:scaleX(0.848)">Programming a PLC</span></span></div>
<div class="ti" style="padding-left:32px"><i class="ac"></i><svg class="ic" width="16" height="14" viewBox="0 0 16 14"><rect x="1" y="1" width="14" height="13" fill="url(#gbk)"/><rect x="10" y="1" width="1" height="12" fill="#6c789a" opacity=".7"/><rect x="11" y="1" width="4" height="1" fill="#6a7698"/><rect x="12" y="2" width="2" height="11" fill="#fff"/><rect x="14" y="1" width="1" height="13" fill="#6a7698"/><rect x="1" y="13" width="14" height="1" fill="#4e5878"/><rect x="2" y="14" width="14" height=".6" fill="#5a6488" opacity=".3"/><rect x="15" y="2" width=".6" height="12" fill="#5a6488" opacity=".3"/></svg><span class="tt" style="width:96px"><span class="tx" style="transform:scaleX(0.848)">Programming basics</span></span></div>
<div class="ti" style="padding-left:32px"><i class="ac"></i><svg class="ic" width="16" height="14" viewBox="0 0 16 14"><rect x="1" y="1" width="14" height="13" fill="url(#gbk)"/><rect x="10" y="1" width="1" height="12" fill="#6c789a" opacity=".7"/><rect x="11" y="1" width="4" height="1" fill="#6a7698"/><rect x="12" y="2" width="2" height="11" fill="#fff"/><rect x="14" y="1" width="1" height="13" fill="#6a7698"/><rect x="1" y="13" width="14" height="1" fill="#4e5878"/><rect x="2" y="14" width="14" height=".6" fill="#5a6488" opacity=".3"/><rect x="15" y="2" width=".6" height="12" fill="#5a6488" opacity=".3"/></svg><span class="tt" style="width:245px"><span class="tx" style="transform:scaleX(0.865)">Programming recommendations (S7-1200, S7-1500)</span></span></div>
<div class="ti" style="padding-left:32px"><i class="ao"></i><svg class="ic" width="16" height="14" viewBox="0 0 16 14"><rect x="0" y="2" width="1" height="10" fill="#6a7698"/><rect x="1" y="1.500" width="6" height="10.500" fill="#eef0ff"/><rect x="6.500" y="1.500" width="1" height="10.500" fill="#f8f8ff"/><rect x="7.500" y="1.500" width="6.500" height="10.500" fill="url(#gpg)"/><rect x="8" y="1" width="6" height=".8" fill="#8a9af0"/><path d="M2 0h4v10.500l-2-2-2 2z" fill="url(#gbm)"/><path d="M2.300 10.200L4 8.500l1.700 1.700" fill="none" stroke="#00002a" stroke-width="1"/><rect x="9" y="4" width="4" height="1" fill="#6a7698"/><rect x="9" y="6" width="4" height="1" fill="#6a7698"/><rect x="9" y="8" width="4" height="1" fill="#6a7698"/><rect x="14" y="2" width="1" height="10" fill="#6a7698"/><rect x="0" y="11.400" width="15" height="1.200" fill="#5a6480"/><rect x="5" y="12" width="5" height="1.300" fill="#4a5070"/><rect x="5.500" y="11.400" width="4" height="1" fill="#4a5ae0"/></svg><span class="tt" style="width:53px"><span class="tx" style="transform:scaleX(0.871)">Data types</span></span></div>
<div class="ti" style="padding-left:48px"><svg class="ic" width="16" height="14" viewBox="0 0 16 14"><rect x="1" y="0" width="14" height="14" fill="url(#gfl)"/><rect x="1" y="12.800" width="14" height="1.200" fill="#2a2a8c"/><path d="M1 .6L5.300 4.600 1 8.600z" fill="#fff"/><rect x="6" y="1.800" width="8" height="11" fill="#fff"/><rect x="7" y="4" width="6" height="1" fill="#484a98"/><rect x="7" y="7" width="6" height="1" fill="#484a98"/><rect x="7" y="10" width="6" height="1" fill="#484a98"/></svg><span class="tt" style="width:154px"><span class="tx" style="transform:scaleX(0.885)">Overview of the valid data types</span></span></div>
<div class="ti" style="padding-left:48px"><i class="ac"></i><svg class="ic" width="16" height="14" viewBox="0 0 16 14"><rect x="1" y="1" width="14" height="13" fill="url(#gbk)"/><rect x="10" y="1" width="1" height="12" fill="#6c789a" opacity=".7"/><rect x="11" y="1" width="4" height="1" fill="#6a7698"/><rect x="12" y="2" width="2" height="11" fill="#fff"/><rect x="14" y="1" width="1" height="13" fill="#6a7698"/><rect x="1" y="13" width="14" height="1" fill="#4e5878"/><rect x="2" y="14" width="14" height=".6" fill="#5a6488" opacity=".3"/><rect x="15" y="2" width=".6" height="12" fill="#5a6488" opacity=".3"/></svg><span class="tt" style="width:74px"><span class="tx" style="transform:scaleX(0.844)">Binary numbers</span></span></div>
<div class="ti" style="padding-left:48px"><i class="ac"></i><svg class="ic" width="16" height="14" viewBox="0 0 16 14"><rect x="1" y="1" width="14" height="13" fill="url(#gbk)"/><rect x="10" y="1" width="1" height="12" fill="#6c789a" opacity=".7"/><rect x="11" y="1" width="4" height="1" fill="#6a7698"/><rect x="12" y="2" width="2" height="11" fill="#fff"/><rect x="14" y="1" width="1" height="13" fill="#6a7698"/><rect x="1" y="13" width="14" height="1" fill="#4e5878"/><rect x="2" y="14" width="14" height=".6" fill="#5a6488" opacity=".3"/><rect x="15" y="2" width=".6" height="12" fill="#5a6488" opacity=".3"/></svg><span class="tt" style="width:40px"><span class="tx" style="transform:scaleX(0.849)">Integers</span></span></div>
<div class="ti" style="padding-left:48px"><i class="ac"></i><svg class="ic" width="16" height="14" viewBox="0 0 16 14"><rect x="1" y="1" width="14" height="13" fill="url(#gbk)"/><rect x="10" y="1" width="1" height="12" fill="#6c789a" opacity=".7"/><rect x="11" y="1" width="4" height="1" fill="#6a7698"/><rect x="12" y="2" width="2" height="11" fill="#fff"/><rect x="14" y="1" width="1" height="13" fill="#6a7698"/><rect x="1" y="13" width="14" height="1" fill="#4e5878"/><rect x="2" y="14" width="14" height=".6" fill="#5a6488" opacity=".3"/><rect x="15" y="2" width=".6" height="12" fill="#5a6488" opacity=".3"/></svg><span class="tt" style="width:108px"><span class="tx" style="transform:scaleX(0.854)">Floating-point numbers</span></span></div>
<div class="ti" style="padding-left:48px"><i class="ac"></i><svg class="ic" width="16" height="14" viewBox="0 0 16 14"><rect x="1" y="1" width="14" height="13" fill="url(#gbk)"/><rect x="10" y="1" width="1" height="12" fill="#6c789a" opacity=".7"/><rect x="11" y="1" width="4" height="1" fill="#6a7698"/><rect x="12" y="2" width="2" height="11" fill="#fff"/><rect x="14" y="1" width="1" height="13" fill="#6a7698"/><rect x="1" y="13" width="14" height="1" fill="#4e5878"/><rect x="2" y="14" width="14" height=".6" fill="#5a6488" opacity=".3"/><rect x="15" y="2" width=".6" height="12" fill="#5a6488" opacity=".3"/></svg><span class="tt" style="width:33px"><span class="tx" style="transform:scaleX(0.817)">Timers</span></span></div>
<div class="ti" style="padding-left:48px"><i class="ac"></i><svg class="ic" width="16" height="14" viewBox="0 0 16 14"><rect x="1" y="1" width="14" height="13" fill="url(#gbk)"/><rect x="10" y="1" width="1" height="12" fill="#6c789a" opacity=".7"/><rect x="11" y="1" width="4" height="1" fill="#6a7698"/><rect x="12" y="2" width="2" height="11" fill="#fff"/><rect x="14" y="1" width="1" height="13" fill="#6a7698"/><rect x="1" y="13" width="14" height="1" fill="#4e5878"/><rect x="2" y="14" width="14" height=".6" fill="#5a6488" opacity=".3"/><rect x="15" y="2" width=".6" height="12" fill="#5a6488" opacity=".3"/></svg><span class="tt" style="width:68px"><span class="tx" style="transform:scaleX(0.865)">Date and time</span></span></div>
<div class="ti" style="padding-left:48px"><i class="ac"></i><svg class="ic" width="16" height="14" viewBox="0 0 16 14"><rect x="1" y="1" width="14" height="13" fill="url(#gbk)"/><rect x="10" y="1" width="1" height="12" fill="#6c789a" opacity=".7"/><rect x="11" y="1" width="4" height="1" fill="#6a7698"/><rect x="12" y="2" width="2" height="11" fill="#fff"/><rect x="14" y="1" width="1" height="13" fill="#6a7698"/><rect x="1" y="13" width="14" height="1" fill="#4e5878"/><rect x="2" y="14" width="14" height=".6" fill="#5a6488" opacity=".3"/><rect x="15" y="2" width=".6" height="12" fill="#5a6488" opacity=".3"/></svg><span class="tt" style="width:81px"><span class="tx" style="transform:scaleX(0.849)">Character strings</span></span></div>
<div class="ti" style="padding-left:48px"><i class="ac"></i><svg class="ic" width="16" height="14" viewBox="0 0 16 14"><rect x="1" y="1" width="14" height="13" fill="url(#gbk)"/><rect x="10" y="1" width="1" height="12" fill="#6c789a" opacity=".7"/><rect x="11" y="1" width="4" height="1" fill="#6a7698"/><rect x="12" y="2" width="2" height="11" fill="#fff"/><rect x="14" y="1" width="1" height="13" fill="#6a7698"/><rect x="1" y="13" width="14" height="1" fill="#4e5878"/><rect x="2" y="14" width="14" height=".6" fill="#5a6488" opacity=".3"/><rect x="15" y="2" width=".6" height="12" fill="#5a6488" opacity=".3"/></svg><span class="tt" style="width:107px"><span class="tx" style="transform:scaleX(0.878)">PLC data types (UDT)</span></span></div>
<div class="ti" style="padding-left:48px"><i class="ac"></i><svg class="ic" width="16" height="14" viewBox="0 0 16 14"><rect x="1" y="1" width="14" height="13" fill="url(#gbk)"/><rect x="10" y="1" width="1" height="12" fill="#6c789a" opacity=".7"/><rect x="11" y="1" width="4" height="1" fill="#6a7698"/><rect x="12" y="2" width="2" height="11" fill="#fff"/><rect x="14" y="1" width="1" height="13" fill="#6a7698"/><rect x="1" y="13" width="14" height="1" fill="#4e5878"/><rect x="2" y="14" width="14" height=".6" fill="#5a6488" opacity=".3"/><rect x="15" y="2" width=".6" height="12" fill="#5a6488" opacity=".3"/></svg><span class="tt" style="width:226px"><span class="tx" style="transform:scaleX(0.877)">STRUCT data structure (anonymous structures)</span></span></div>
<div class="ti" style="padding-left:48px"><i class="ac"></i><svg class="ic" width="16" height="14" viewBox="0 0 16 14"><rect x="1" y="1" width="14" height="13" fill="url(#gbk)"/><rect x="10" y="1" width="1" height="12" fill="#6c789a" opacity=".7"/><rect x="11" y="1" width="4" height="1" fill="#6a7698"/><rect x="12" y="2" width="2" height="11" fill="#fff"/><rect x="14" y="1" width="1" height="13" fill="#6a7698"/><rect x="1" y="13" width="14" height="1" fill="#4e5878"/><rect x="2" y="14" width="14" height=".6" fill="#5a6488" opacity=".3"/><rect x="15" y="2" width=".6" height="12" fill="#5a6488" opacity=".3"/></svg><span class="tt" style="width:39px"><span class="tx" style="transform:scaleX(0.88)">ARRAY</span></span></div>
<div class="ti" style="padding-left:48px"><i class="ao"></i><svg class="ic" width="16" height="14" viewBox="0 0 16 14"><rect x="0" y="2" width="1" height="10" fill="#6a7698"/><rect x="1" y="1.500" width="6" height="10.500" fill="#eef0ff"/><rect x="6.500" y="1.500" width="1" height="10.500" fill="#f8f8ff"/><rect x="7.500" y="1.500" width="6.500" height="10.500" fill="url(#gpg)"/><rect x="8" y="1" width="6" height=".8" fill="#8a9af0"/><path d="M2 0h4v10.500l-2-2-2 2z" fill="url(#gbm)"/><path d="M2.300 10.200L4 8.500l1.700 1.700" fill="none" stroke="#00002a" stroke-width="1"/><rect x="9" y="4" width="4" height="1" fill="#6a7698"/><rect x="9" y="6" width="4" height="1" fill="#6a7698"/><rect x="9" y="8" width="4" height="1" fill="#6a7698"/><rect x="14" y="2" width="1" height="10" fill="#6a7698"/><rect x="0" y="11.400" width="15" height="1.200" fill="#5a6480"/><rect x="5" y="12" width="5" height="1.300" fill="#4a5070"/><rect x="5.500" y="11.400" width="4" height="1" fill="#4a5ae0"/></svg><span class="tt" style="width:35px"><span class="tx" style="transform:scaleX(0.847)">Pointer</span></span></div>
<div class="ti" style="padding-left:64px"><i class="ac"></i><svg class="ic" width="16" height="14" viewBox="0 0 16 14"><rect x="1" y="1" width="14" height="13" fill="url(#gbk)"/><rect x="10" y="1" width="1" height="12" fill="#6c789a" opacity=".7"/><rect x="11" y="1" width="4" height="1" fill="#6a7698"/><rect x="12" y="2" width="2" height="11" fill="#fff"/><rect x="14" y="1" width="1" height="13" fill="#6a7698"/><rect x="1" y="13" width="14" height="1" fill="#4e5878"/><rect x="2" y="14" width="14" height=".6" fill="#5a6488" opacity=".3"/><rect x="15" y="2" width=".6" height="12" fill="#5a6488" opacity=".3"/></svg><span class="tt" style="width:107px"><span class="tx" style="transform:scaleX(0.878)">References (S7-1500)</span></span></div>
<div class="ti" style="padding-left:64px"><i class="ac"></i><svg class="ic" width="16" height="14" viewBox="0 0 16 14"><rect x="1" y="1" width="14" height="13" fill="url(#gbk)"/><rect x="10" y="1" width="1" height="12" fill="#6c789a" opacity=".7"/><rect x="11" y="1" width="4" height="1" fill="#6a7698"/><rect x="12" y="2" width="2" height="11" fill="#fff"/><rect x="14" y="1" width="1" height="13" fill="#6a7698"/><rect x="1" y="13" width="14" height="1" fill="#4e5878"/><rect x="2" y="14" width="14" height=".6" fill="#5a6488" opacity=".3"/><rect x="15" y="2" width=".6" height="12" fill="#5a6488" opacity=".3"/></svg><span class="tt" style="width:144px"><span class="tx" style="transform:scaleX(0.884)">VARIANT (S7-1200, S7-1500)</span></span></div>
<div class="ti" style="padding-left:64px"><svg class="ic" width="16" height="14" viewBox="0 0 16 14"><rect x="1" y="0" width="14" height="14" fill="url(#gfl)"/><rect x="1" y="12.800" width="14" height="1.200" fill="#2a2a8c"/><path d="M1 .6L5.300 4.600 1 8.600z" fill="#fff"/><rect x="6" y="1.800" width="8" height="11" fill="#fff"/><rect x="7" y="4" width="6" height="1" fill="#484a98"/><rect x="7" y="7" width="6" height="1" fill="#484a98"/><rect x="7" y="10" width="6" height="1" fill="#484a98"/></svg><span class="tt tsel" style="width:178px"><span class="tx" style="transform:scaleX(0.874)">POINTER (S7-300, S7-400, S7-1500)</span></span></div>
<div class="ti" style="padding-left:64px"><svg class="ic" width="16" height="14" viewBox="0 0 16 14"><rect x="1" y="0" width="14" height="14" fill="url(#gfl)"/><rect x="1" y="12.800" width="14" height="1.200" fill="#2a2a8c"/><path d="M1 .6L5.300 4.600 1 8.600z" fill="#fff"/><rect x="6" y="1.800" width="8" height="11" fill="#fff"/><rect x="7" y="4" width="6" height="1" fill="#484a98"/><rect x="7" y="7" width="6" height="1" fill="#484a98"/><rect x="7" y="10" width="6" height="1" fill="#484a98"/></svg><span class="tt" style="width:153px"><span class="tx" style="transform:scaleX(0.873)">ANY (S7-300, S7-400, S7-1500)</span></span></div>
<div class="ti" style="padding-left:48px"><i class="ac"></i><svg class="ic" width="16" height="14" viewBox="0 0 16 14"><rect x="1" y="1" width="14" height="13" fill="url(#gbk)"/><rect x="10" y="1" width="1" height="12" fill="#6c789a" opacity=".7"/><rect x="11" y="1" width="4" height="1" fill="#6a7698"/><rect x="12" y="2" width="2" height="11" fill="#fff"/><rect x="14" y="1" width="1" height="13" fill="#6a7698"/><rect x="1" y="13" width="14" height="1" fill="#4e5878"/><rect x="2" y="14" width="14" height=".6" fill="#5a6488" opacity=".3"/><rect x="15" y="2" width=".6" height="12" fill="#5a6488" opacity=".3"/></svg><span class="tt" style="width:78px"><span class="tx" style="transform:scaleX(0.848)">Parameter types</span></span></div>
<div class="ti" style="padding-left:48px"><i class="ac"></i><svg class="ic" width="16" height="14" viewBox="0 0 16 14"><rect x="1" y="1" width="14" height="13" fill="url(#gbk)"/><rect x="10" y="1" width="1" height="12" fill="#6c789a" opacity=".7"/><rect x="11" y="1" width="4" height="1" fill="#6a7698"/><rect x="12" y="2" width="2" height="11" fill="#fff"/><rect x="14" y="1" width="1" height="13" fill="#6a7698"/><rect x="1" y="13" width="14" height="1" fill="#4e5878"/><rect x="2" y="14" width="14" height=".6" fill="#5a6488" opacity=".3"/><rect x="15" y="2" width=".6" height="12" fill="#5a6488" opacity=".3"/></svg><span class="tt" style="width:88px"><span class="tx" style="transform:scaleX(0.86)">System data types</span></span></div>
</div>
<div id="msb" class="abs">
<div class="sbtn" style="left:0;top:0;width:18px;height:18px"><span class="chev" style="left:4px"></span></div>
<div class="sbtn" style="left:0;top:19px;width:18px;height:600px"><span class="grip" style="left:5px;top:307px"></span></div>
</div>
</div><!-- /mid -->

<div class="split" style="left:671px"><div class="h hl" style="top:461px"></div><div class="h hr" style="top:495px"></div></div>

<div id="right" class="abs">
<div id="rtool" class="abs">
<svg class="abs" style="left:6px;top:3px" width="18" height="17" viewBox="0 0 18 17"><path d="M1.500 5V15.500H3" fill="none" stroke="#8a8a8a" stroke-width="1"/><path d="M1.500 .5V3.500H4.500V11.500H7" fill="none" stroke="#2a3ae0" stroke-width="1.200"/><path d="M5 3.500l3-1M5 7.500l3-1" stroke="#9aa" stroke-width=".6" stroke-dasharray=".7 .7"/><rect x="8" y="1" width="3" height="2.600" fill="#1a2ac8"/><rect x="8" y="5" width="3" height="2.600" fill="#1a2ac8"/><rect x="8" y="9" width="3" height="2.800" fill="#1a2ac8"/><rect x="4" y="13" width="3" height="2.500" fill="#9a9a9a"/><path d="M12 10.500l4-3.500v7z" fill="#000040"/></svg>
<i class="abs" style="left:28px;top:0;width:1px;height:24px;background:repeating-linear-gradient(#888 0,#888 1px,transparent 1px,transparent 2px)"></i>
<svg class="abs" style="left:34px;top:3px" width="19" height="18" viewBox="0 0 19 18"><defs><radialGradient id="ggr" cx=".5" cy=".3" r=".7"><stop offset="0" stop-color="#3cb03c"/><stop offset="1" stop-color="#1e8a24"/></radialGradient></defs><circle cx="9.500" cy="8.500" r="7" fill="url(#ggr)" stroke="#1c6a20" stroke-width="1"/><path d="M4 8.500l4.800-4.400v2.700h5.200v3.500H8.800v2.700z" fill="#fff"/></svg>
<svg class="abs" style="left:58px;top:3px" width="19" height="18" viewBox="0 0 19 18"><circle cx="9.500" cy="8.500" r="7" fill="#8e8e8e" stroke="#787878" stroke-width="1"/><path d="M15 8.500l-4.800-4.400v2.700H5v3.500h5.200v2.700z" fill="#fff"/></svg>
<svg class="abs" style="left:85px;top:3px" width="16" height="18" viewBox="0 0 16 18"><path d="M1 1h5v15l-2.500-2.500L1 16z" fill="url(#gbm)"/><path d="M8.200 1h5.100v15l-2.550-2.500L8.200 16z" fill="url(#gbm)"/><path d="M1.200 16l2.300-2.400 2.300 2.400M8.400 16l2.350-2.400 2.350 2.400" fill="none" stroke="#00002a" stroke-width=".9"/></svg>
<svg class="abs" style="left:107px;top:2px" width="20" height="20" viewBox="0 0 20 20"><defs><linearGradient id="gsq" x1="0" y1="0" x2="1" y2="1"><stop offset="0" stop-color="#6c7afa"/><stop offset="1" stop-color="#2830d8"/></linearGradient></defs><rect x="1" y="5" width="12.300" height="12" fill="url(#gsq)"/><rect x="1" y="16" width="12.300" height="1" fill="#0a0a70"/><path d="M12.500 2.200v9.600M7.700 7h9.600M9.100 3.600l6.800 6.800M15.900 3.600l-6.800 6.800" stroke="#5a5a10" stroke-width="2"/><path d="M12.500 2.500v9M8 7h9M9.300 3.800l6.400 6.400M15.700 3.800l-6.400 6.400" stroke="#f8f020" stroke-width="1.200"/></svg>
</div>
<div id="rband" class="abs"></div>
<div id="rtab" class="abs">POINTER (S7-300, S7-400, S7-1...<svg class="abs" style="left:233px;top:4px" width="12" height="12" viewBox="0 0 12 12"><path d="M1.500 1.800l8.400 8.400M9.900 1.800l-8.400 8.400" stroke="#111" stroke-width="1.600"/></svg></div>
<div id="doc" class="abs">
<h1>POINTER</h1>
<hr>
<h2 style="top:63px">Description</h2>
<div class="ln" style="top:85px">A parameter of the type POINTER is a pointer that can point to a specific tag. It occupies 6 bytes</div>
<i class="dot" style="top:116px"></i><div class="ln bl" style="top:107px">DB number, or 0 if the data is not stored in a DB</div>
<i class="dot" style="top:138px"></i><div class="ln bl" style="top:129px">Memory area in the CPU</div>
<i class="dot" style="top:160px"></i><div class="ln bl" style="top:151px">Tag address</div>
<div class="ln" style="top:186px">The following figure shows the structure of parameter type POINTER:</div>

<svg class="abs" style="left:0;top:200px" width="420" height="180" viewBox="0 0 420 180" font-size="11" fill="#333">
<text x="194" y="20" text-anchor="middle">Pointer format</text>
<text x="55" y="44">Bit</text><text x="339" y="44">Bit</text>
<text x="55" y="64">15 ...</text><text x="181" y="64">... 8</text><text x="207" y="64">7 ...</text><text x="337" y="64">... 0</text>
<text x="9" y="83">Byte 0</text><text x="9" y="108">Byte 2</text><text x="9" y="134">Byte 4</text>
<text x="362" y="83">Byte 1</text><text x="362" y="108">Byte 3</text><text x="362" y="134">Byte 5</text>
<rect x="52.500" y="73.500" width="302" height="23" fill="#8e8e8e" stroke="#222"/>
<rect x="52.500" y="96.500" width="151" height="22" fill="#d8d8d8" stroke="#222"/>
<g stroke="#222">
<rect x="203.500" y="96.500" width="19" height="22" fill="#acacac"/><rect x="222.500" y="96.500" width="19" height="22" fill="#acacac"/><rect x="241.500" y="96.500" width="19" height="22" fill="#acacac"/><rect x="260.500" y="96.500" width="19" height="22" fill="#acacac"/><rect x="279.500" y="96.500" width="18" height="22" fill="#acacac"/>
<rect x="297.500" y="96.500" width="19" height="22" fill="#dcdcdc"/><rect x="316.500" y="96.500" width="19" height="22" fill="#dcdcdc"/><rect x="335.500" y="96.500" width="19" height="22" fill="#dcdcdc"/>
<rect x="52.500" y="118.500" width="19" height="24" fill="#dcdcdc"/><rect x="71.500" y="118.500" width="19" height="24" fill="#dcdcdc"/><rect x="90.500" y="118.500" width="19" height="24" fill="#dcdcdc"/><rect x="109.500" y="118.500" width="19" height="24" fill="#dcdcdc"/><rect x="128.500" y="118.500" width="19" height="24" fill="#dcdcdc"/><rect x="147.500" y="118.500" width="18" height="24" fill="#dcdcdc"/><rect x="165.500" y="118.500" width="19" height="24" fill="#dcdcdc"/><rect x="184.500" y="118.500" width="19" height="24" fill="#dcdcdc"/>
<rect x="203.500" y="118.500" width="19" height="24" fill="#dcdcdc"/><rect x="222.500" y="118.500" width="19" height="24" fill="#dcdcdc"/><rect x="241.500" y="118.500" width="19" height="24" fill="#dcdcdc"/><rect x="260.500" y="118.500" width="19" height="24" fill="#dcdcdc"/><rect x="279.500" y="118.500" width="18" height="24" fill="#dcdcdc"/>
<rect x="297.500" y="118.500" width="19" height="24" fill="#acacac"/><rect x="316.500" y="118.500" width="19" height="24" fill="#acacac"/><rect x="335.500" y="118.500" width="19" height="24" fill="#acacac"/>
</g>
<text x="203" y="87" text-anchor="middle">DB number (or 0)</text>
<text x="74" y="113">Memory area</text>
<g text-anchor="middle">
<text x="213.8" y="112">0</text><text x="232.5" y="112">0</text><text x="251.2" y="112">0</text><text x="269.9" y="112">0</text><text x="288.6" y="112">0</text><text x="307.3" y="112">b</text><text x="326.0" y="112">b</text><text x="344.7" y="112">b</text>
<text x="64.2" y="133">b</text><text x="82.9" y="133">b</text><text x="101.6" y="133">b</text><text x="120.3" y="133">b</text><text x="139.0" y="133">b</text><text x="157.7" y="133">b</text><text x="176.4" y="133">b</text><text x="195.1" y="133">b</text><text x="213.8" y="133">b</text><text x="232.5" y="133">b</text><text x="251.2" y="133">b</text><text x="269.9" y="133">b</text><text x="288.6" y="133">b</text><text x="307.3" y="133">x</text><text x="326.0" y="133">x</text><text x="344.7" y="133">x</text>
</g>
<path d="M52.500 142.500Q52.500 146.500 58.500 146.500H172Q177 146.500 178 152Q179 146.500 184 146.500H291.500Q297.500 146.500 297.500 142.500Q297.500 146.500 303.500 146.500H320Q325 146.500 326 152Q327 146.500 332 146.500H348.500Q354.500 146.500 354.500 142.500" fill="none" stroke="#222" stroke-width="1"/>
<text x="180" y="165" text-anchor="middle">b = Byte address of the tag</text>
<text x="326" y="165" text-anchor="middle">x = Bit address of</text>
<text x="326" y="178" text-anchor="middle">the tag</text>
</svg>

<h2 style="top:414px;letter-spacing:.4px">Types of pointer</h2>
<div class="ln" style="top:436px">Depending on the information, you can use parameter type POINTER to declare the following</div>
<i class="dot" style="top:467px"></i><div class="ln bl" style="top:458px">Area-internal pointer:</div>
<div class="ln bl" style="top:480px">An area-internal pointer contains information on the address of a tag.</div>
<i class="dot" style="top:511px"></i><div class="ln bl" style="top:502px">Cross-area pointer:</div>
<div class="ln bl" style="top:524px">A cross-area pointer contains information on the memory area and the address of a tag.</div>
<i class="dot" style="top:555px"></i><div class="ln bl" style="top:546px">DB pointer:</div>
<div class="ln bl" style="top:568px">You can use a DB pointer to point to a data block tag. A DB pointer also contains a data block number</div>
</div>
</div><!-- /right -->
</div><!-- /app -->
</body>
</html>
